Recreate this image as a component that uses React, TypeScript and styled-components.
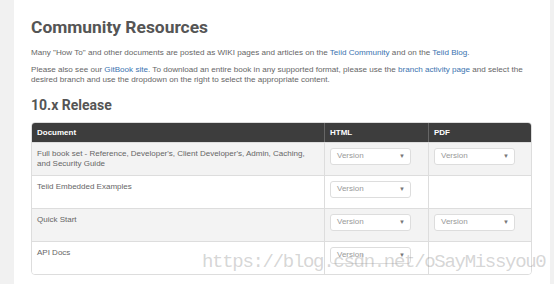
import React from "react";
import styled, { createGlobalStyle } from "styled-components";

const Global = createGlobalStyle`
  html, body { margin: 0; padding: 0; background: #f1f1f1; }
  body { font-family: "Liberation Sans", Arial, sans-serif; }
`;

const Page = styled.div`
  position: relative;
  display: flex;
  height: 284px;
  overflow: hidden;
  padding: 0 4px 0 14px;
`;

const Panel = styled.main`
  flex: 1;
  background: #fff;
  padding: 15px 18px 0 17px;
  display: flex;
  flex-direction: column;
`;

const Title = styled.h1`
  margin: 0 0 9px;
  font-family: Roboto, sans-serif;
  font-weight: 700;
  font-size: 17.4px;
  line-height: 24px;
  color: #555;
`;

const Para = styled.p`
  margin: 0 0 6px;
  font-size: 8.1px;
  line-height: 10.5px;
  color: #666;
`;

const Link = styled.a`
  color: #3b73af;
  text-decoration: none;
`;

const SubTitle = styled.h2`
  margin: 3px 0 7px;
  font-family: Roboto, sans-serif;
  font-weight: 700;
  font-size: 14px;
  line-height: 20px;
  color: #555;
`;

const Table = styled.div`
  border: 1px solid #ddd;
  border-radius: 4px;
  overflow: hidden;
  display: grid;
  grid-template-columns: 293px 104px 1fr;
  font-size: 8px;
  color: #666;
`;

const Head = styled.div<{ $last?: boolean }>`
  background: #3d3d3d;
  color: #fff;
  font-weight: 700;
  height: 19px;
  line-height: 19px;
  padding: 0 5px;
  border-right: ${(p) => (p.$last ? "none" : "1px solid #666")};
`;

const Cell = styled.div<{ $striped?: boolean; $last?: boolean }>`
  background: ${(p) => (p.$striped ? "#f3f3f3" : "#fff")};
  border-top: 1px solid #ddd;
  border-right: ${(p) => (p.$last ? "none" : "1px solid #ddd")};
  height: 33px;
  box-sizing: border-box;
  padding: 6px 5px 0;
  line-height: 10px;
`;

const Select = styled.div`
  display: flex;
  align-items: center;
  justify-content: space-between;
  width: 81px;
  height: 17px;
  box-sizing: border-box;
  border: 1px solid #ddd;
  border-radius: 3px;
  background: #fff;
  padding: 0 5px 0 6px;
  color: #999;
  font-size: 8px;
  margin-top: -1px;
`;

const Arrow = styled.span`
  font-size: 6px;
  color: #777;
`;

const Watermark = styled.div`
  position: absolute;
  left: 202px;
  top: 251px;
  font-family: "Liberation Mono", monospace;
  font-size: 19px;
  letter-spacing: -1.3px;
  color: rgba(150, 150, 150, 0.4);
  pointer-events: none;
  white-space: nowrap;
`;

const rows: { name: React.ReactNode; html: boolean; pdf: boolean }[] = [
  {
    name: (
      <>
        Full book set - Reference, Developer's, Client Developer's, Admin, Caching,
        <br />
        and Security Guide
      </>
    ),
    html: true,
    pdf: true,
  },
  { name: "Teiid Embedded Examples", html: true, pdf: false },
  { name: "Quick Start", html: true, pdf: true },
  { name: "API Docs", html: true, pdf: false },
];

const VersionSelect = () => (
  <Select>
    Version<Arrow>▼</Arrow>
  </Select>
);

export default function App() {
  return (
    <>
      <Global />
      <Page>
        <Panel>
          <Title>Community Resources</Title>
          <Para>
            Many "How To" and other documents are posted as WIKI pages and articles on the{" "}
            <Link>Teiid Community</Link> and on the <Link>Teiid Blog</Link>.
          </Para>
          <Para>
            Please also see our <Link>GitBook site</Link>. To download an entire book in any supported
            format, please use the <Link>branch activity page</Link> and select the
            <br />
            desired branch and use the dropdown on the right to select the appropriate content.
          </Para>
          <SubTitle>10.x Release</SubTitle>
          <Table>
            <Head>Document</Head>
            <Head>HTML</Head>
            <Head $last>PDF</Head>
            {rows.map((r, i) => (
              <React.Fragment key={i}>
                <Cell $striped={i % 2 === 0}>{r.name}</Cell>
                <Cell $striped={i % 2 === 0}>{r.html && <VersionSelect />}</Cell>
                <Cell $striped={i % 2 === 0} $last>
                  {r.pdf && <VersionSelect />}
                </Cell>
              </React.Fragment>
            ))}
          </Table>
        </Panel>
        <Watermark>https://blog.csdn.net/oSayMissyou0</Watermark>
      </Page>
    </>
  );
}
